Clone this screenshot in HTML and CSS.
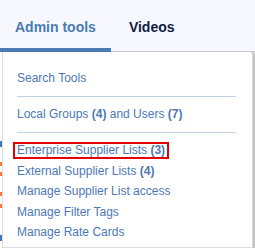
FILE: index.html
```html
<!DOCTYPE html>
<html lang="en">
<head>
  <meta charset="UTF-8">
  <meta name="viewport" content="width=device-width, initial-scale=1.0">
  <title>Admin tools</title>
  <link rel="stylesheet" href="styles.css">
</head>
<body>

  <nav class="tabs">
    <a href="#" class="tab activo">Admin tools</a>
    <a href="#" class="tab">Videos</a>
  </nav>

  <div class="pagina">
    <div class="fondo">
      <span class="marca azul" style="top: 89px"></span>
      <span class="marca naranja" style="top: 110px"></span>
      <span class="marca naranja" style="top: 120px"></span>
      <span class="marca naranja" style="top: 140px"></span>
      <span class="marca naranja" style="top: 152px"></span>
      <span class="marca azul" style="top: 183px"></span>
    </div>

    <div class="menu">
      <a href="#" class="item">Search Tools</a>
      <hr class="separador">
      <a href="#" class="item">Local Groups <b>(4)</b> and Users <b>(7)</b></a>
      <hr class="separador">
      <div class="lista">
        <a href="#" class="item"><span class="resaltado">Enterprise Supplier Lists <b>(3)</b></span></a>
        <a href="#" class="item">External Supplier Lists <b>(4)</b></a>
        <a href="#" class="item">Manage Supplier List access</a>
        <a href="#" class="item">Manage Filter Tags</a>
        <a href="#" class="item">Manage Rate Cards</a>
      </div>
    </div>
  </div>

</body>
</html>
```

FILE: styles.css
```css
body {
  font-family: "Liberation Sans", Arial, sans-serif;
  margin: 0;
  padding: 0;
  background-color: white;
}
.tabs {
  display: flex;
  gap: 3px;
  height: 52px;
  background-color: #f7f8fd;
  box-shadow: inset 0 -1px 0 #cdcdcd;
}
.tab {
  display: flex;
  align-items: center;
  padding: 2px 15px 0;
  font-size: 14px;
  font-weight: bold;
  color: #0f1b45;
  text-decoration: none;
}
.tab.activo {
  color: #4a7bb2;
  box-shadow: inset 0 -4px 0 #4a7bb2;
}
.pagina {
  position: relative;
  height: 196px;
}
.fondo {
  position: absolute;
  inset: 0;
}
.marca {
  position: absolute;
  left: 0;
  width: 2px;
  height: 6px;
}
.marca.azul {
  background-color: #3f78b4;
}
.marca.naranja {
  background-color: #f47b3e;
  height: 4px;
}
.menu {
  position: absolute;
  top: 0;
  left: 2px;
  right: 2px;
  bottom: 0;
  background-color: white;
  border: 1px solid #dcdcdc;
  border-top: none;
  border-radius: 0 3px 0 0;
  box-shadow: 2px 0 1px rgba(0, 0, 0, 0.25);
  padding: 16px 16px 0 14px;
}
.item {
  display: block;
  font-size: 12px;
  line-height: 20px;
  color: #4c79b4;
  text-decoration: none;
}
.item b {
  font-weight: bold;
}
.lista .item {
  line-height: 20.5px;
}
.separador {
  border: none;
  height: 1px;
  background-color: #c3d2e4;
  margin: 8px 0 7px;
}
.separador + .lista {
  margin-top: 1px;
}
.resaltado {
  display: inline-block;
  line-height: 13px;
  border: 2px solid #e60000;
  padding: 0 2px;
  margin-left: -4px;
}
```
